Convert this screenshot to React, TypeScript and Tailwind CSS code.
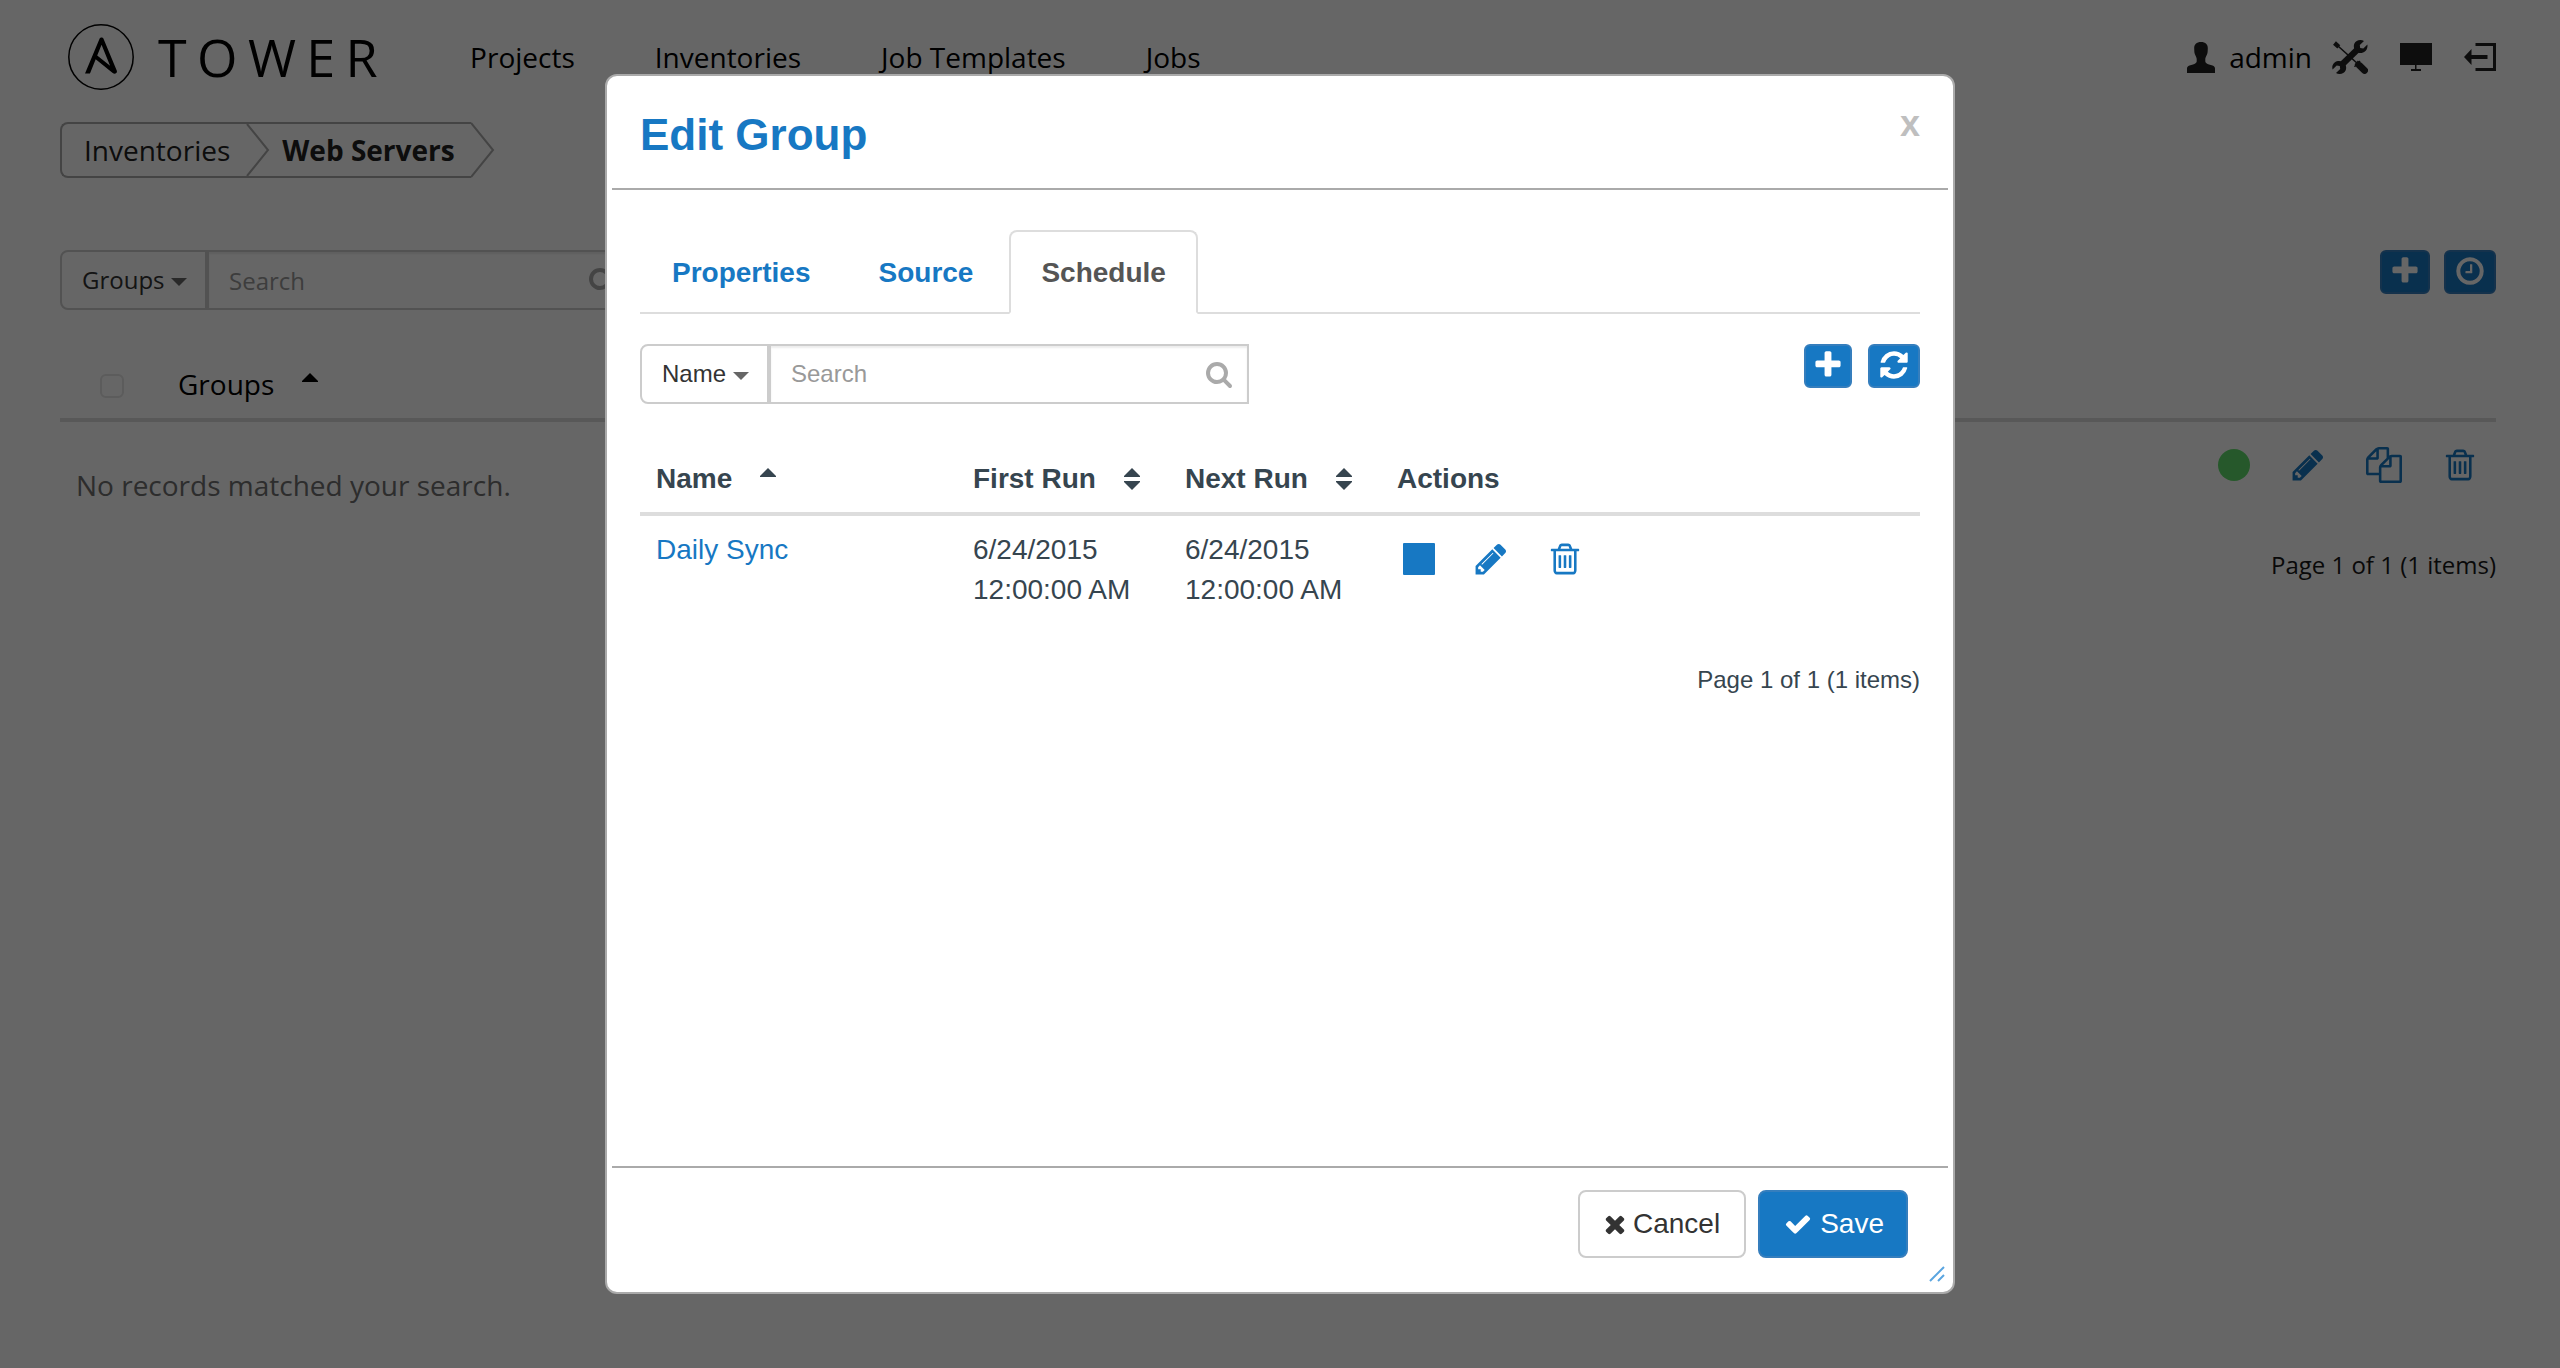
import React from "react";

const PATHS = {
  pencil:
    "M491 1536l91-91-235-235-91 91v107h128v128h107zm523-928q0-22-22-22-10 0-17 7l-542 542q-7 7-7 17 0 22 22 22 10 0 17-7l542-542q7-7 7-17zm-54-192l416 416-832 832h-416v-416zm683 96q0 53-37 90l-166 166-416-416 166-165q36-38 90-38 53 0 91 38l235 234q37 39 37 91z",
  trash:
    "M704 736v576q0 14-9 23t-23 9h-64q-14 0-23-9t-9-23v-576q0-14 9-23t23-9h64q14 0 23 9t9 23zm256 0v576q0 14-9 23t-23 9h-64q-14 0-23-9t-9-23v-576q0-14 9-23t23-9h64q14 0 23 9t9 23zm256 0v576q0 14-9 23t-23 9h-64q-14 0-23-9t-9-23v-576q0-14 9-23t23-9h64q14 0 23 9t9 23zm128 724v-948h-896v948q0 22 7 40.5t14.5 27 10.5 8.5h832q3 0 10.5-8.5t14.5-27 7-40.5zm-672-1076h448l-48-117q-7-9-17-11h-317q-10 2-17 11zm928 32v64q0 14-9 23t-23 9h-96v948q0 83-47 143.5t-113 60.5h-832q-66 0-113-58.5t-47-141.5v-952h-96q-14 0-23-9t-9-23v-64q0-14 9-23t23-9h309l70-167q15-37 54-63t79-26h320q40 0 79 26t54 63l70 167h309q14 0 23 9t9 23z",
  files:
    "M1696 384q40 0 68 28t28 68v1216q0 40-28 68t-68 28h-960q-40 0-68-28t-28-68v-288h-544q-40 0-68-28t-28-68v-672q0-40 20-88t48-76l408-408q28-28 76-48t88-20h416q40 0 68 28t28 68v328q68-40 128-40h416zm-544 213l-299 299h299v-299zm-640-384l-299 299h299v-299zm196 647l316-316v-416h-384v416q0 40-28 68t-68 28h-416v640h512v-256q0-40 20-88t48-76zm956 804v-1152h-384v416q0 40-28 68t-68 28h-416v640h896z",
  plus: "M1600 736v192q0 40-28 68t-68 28h-416v416q0 40-28 68t-68 28h-192q-40 0-68-28t-28-68v-416h-416q-40 0-68-28t-28-68v-192q0-40 28-68t68-28h416v-416q0-40 28-68t68-28h192q40 0 68 28t28 68v416h416q40 0 68 28t28 68z",
  clock:
    "M1024 544v448q0 14-9 23t-23 9h-320q-14 0-23-9t-9-23v-64q0-14 9-23t23-9h224v-352q0-14 9-23t23-9h64q14 0 23 9t9 23zm416 352q0-148-73-273t-198-198-273-73-273 73-198 198-73 273 73 273 198 198 273 73 273-73 198-198 73-273zm224 0q0 209-103 385.5t-279.5 279.5-385.5 103-385.5-103-279.5-279.5-103-385.5 103-385.5 279.5-279.5 385.5-103 385.5 103 279.5 279.5 103 385.5z",
  refresh:
    "M1639 1056q0 5-1 7-64 268-268 434.5t-478 166.5q-146 0-282.5-55t-243.5-157l-129 129q-19 19-45 19t-45-19-19-45v-448q0-26 19-45t45-19h448q26 0 45 19t19 45-19 45l-137 137q71 66 161 102t187 36q134 0 250-65t186-179q11-17 53-117 8-23 30-23h192q13 0 22.5 9.5t9.5 22.5zm25-800v448q0 26-19 45t-45 19h-448q-26 0-45-19t-19-45 19-45l138-138q-148-137-349-137-134 0-250 65t-186 179q-11 17-53 117-8 23-30 23h-199q-13 0-22.5-9.5t-9.5-22.5v-7q65-268 270-434.5t480-166.5q146 0 284 55.5t245 156.5l130-129q19-19 45-19t45 19 19 45z",
  times:
    "M1490 1322q0 40-28 68l-136 136q-28 28-68 28t-68-28l-294-294-294 294q-28 28-68 28t-68-28l-136-136q-28-28-28-68t28-68l294-294-294-294q-28-28-28-68t28-68l136-136q28-28 68-28t68 28l294 294 294-294q28-28 68-28t68 28l136 136q28 28 28 68t-28 68l-294 294 294 294q28 28 28 68z",
  check:
    "M1671 566q0 40-28 68l-724 724-136 136q-28 28-68 28t-68-28l-136-136-362-362q-28-28-28-68t28-68l136-136q28-28 68-28t68 28l294 295 656-657q28-28 68-28t68 28l136 136q28 28 28 68z",
  search:
    "M1216 832q0-185-131.5-316.5t-316.5-131.5-316.5 131.5-131.5 316.5 131.5 316.5 316.5 131.5 316.5-131.5 131.5-316.5zm512 832q0 52-38 90t-90 38q-54 0-90-38l-343-342q-179 124-399 124-143 0-273.5-55.5t-225-150-150-225-55.5-273.5 55.5-273.5 150-225 225-150 273.5-55.5 273.5 55.5 225 150 150 225 55.5 273.5q0 220-124 399l343 343q37 37 37 90z",
};

function Icon({ name, className }: { name: keyof typeof PATHS; className: string }) {
  return (
    <svg viewBox="0 0 1792 1792" className={className} fill="currentColor" aria-hidden="true">
      <path d={PATHS[name]} />
    </svg>
  );
}

function AnsibleMark() {
  return (
    <svg viewBox="0 0 66 66" className="size-[66px] shrink-0" aria-hidden="true">
      <circle cx="33" cy="33" r="32.2" fill="none" stroke="currentColor" strokeWidth="1.5" />
      <path
        transform="scale(2.75)"
        fillRule="evenodd"
        d="M17.797 17.305c-.011.471-.403.842-.875.83-.236 0-.416-.09-.664-.293l-6.19-5-2.079 5.203H6.191L11.438 5.44c.124-.314.427-.52.764-.506.326-.014.63.189.742.506l4.774 11.494c.045.111.08.234.08.348zM10.617 11.473l4.686 3.695-3.102-7.662z"
      />
    </svg>
  );
}

function UserIcon() {
  return (
    <svg viewBox="0 0 28 31" className="h-[31px] w-7" fill="currentColor" aria-hidden="true">
      <path d="M14 0C9.500 0 7 2.500 7.200 6.500C7.300 9 7.300 11 8 12.500C8.800 14.500 9.700 15.500 9.700 17V19.500C9.500 21 8 21.800 6 22.400L2.500 23.400C.8 24 0 25 0 26.500V31H28V26.500C28 25 27.200 24 25.500 23.400L22 22.400C20 21.800 18.500 21 18.300 19.500V17C18.300 15.500 19.200 14.500 20 12.500C20.700 11 20.700 9 20.800 6.500C21 2.500 18.500 0 14 0Z" />
    </svg>
  );
}

function ToolsIcon() {
  return (
    <svg viewBox="0 0 36 34" className="h-[34px] w-9" fill="none" stroke="currentColor" aria-hidden="true">
      <path d="M6 6L26 24" strokeWidth="1.600" />
      <path d="M2.500 3L6.800 6.800" strokeWidth="4.400" />
      <path d="M24.200 22.300L27.500 25.300" strokeWidth="5" />
      <path d="M27.500 25.600L32.600 30.400" strokeWidth="6.800" strokeLinecap="round" />
      <path d="M22.500 26.800L28 21" strokeWidth="1.600" />
      <path d="M9 25.500L26.500 8.500" strokeWidth="6.400" />
      <path
        fill="currentColor"
        stroke="none"
        d="M32 .9L27.800 5L28.200 8L31.300 8.400L35.400 4.400C36 8.500 33.800 12.200 29.800 12.900C27.500 13.300 25.300 12.600 23.700 11C21.800 9 21.300 6 22.400 3.500C24 .2 28.500-1 32 .9Z"
      />
      <path
        fill="currentColor"
        stroke="none"
        d="M4 33.100L8.200 29L7.800 26L4.700 25.600L.6 29.600C-.6 25.500 1.800 21.600 6 21C8.500 20.700 10.700 21.400 12.300 23C14.200 25 14.700 28 13.600 30.500C12 33.800 7.500 35 4 33.100Z"
      />
    </svg>
  );
}

function MonitorIcon() {
  return (
    <svg viewBox="0 0 32 28" className="h-7 w-8" fill="currentColor" aria-hidden="true">
      <path d="M0 0H32V22H16.500V26H21V28H11V26H15V22H0Z" />
    </svg>
  );
}

function ExitIcon() {
  return (
    <svg viewBox="0 0 32 28" className="h-7 w-8" fill="currentColor" aria-hidden="true">
      <path d="M0 14L7.500 6V12H23.500V16H7.500V22ZM11.500 0H32V28H11.500V25H29V3H11.500Z" />
    </svg>
  );
}

function SortIcon({ both = false }: { both?: boolean }) {
  return (
    <svg viewBox="0 0 16 22" className="h-[22px] w-4" fill="currentColor" aria-hidden="true">
      <path d="M8 0L16 8V9H0V8Z" />
      {both && <path d="M0 13H16V14L8 22L0 14Z" />}
    </svg>
  );
}

function SearchGroup({ id, field, width }: { id: string; field: string; width: string }) {
  return (
    <div className="flex h-[60px] text-2xl">
      <div className="relative flex">
        <select
          aria-label="Search field"
          className="h-full appearance-none rounded-l-lg border-2 border-[#ccc] bg-white pr-10 pl-5 text-[#333]"
        >
          <option>{field}</option>
        </select>
        <svg
          viewBox="0 0 16 8"
          className="pointer-events-none absolute top-[28px] right-5 h-2 w-4"
          fill="#666"
          aria-hidden="true"
        >
          <path d="M0 0H16L8 8Z" />
        </svg>
      </div>
      <div className={"relative " + width}>
        <input
          id={id}
          type="text"
          aria-label="Search"
          placeholder="Search"
          className="h-full w-full border-2 border-[#ccc] bg-white pr-16 pl-5 text-[#333] shadow-[inset_0_2px_2px_rgba(0,0,0,0.075)] placeholder:text-[#999]"
        />
        <button type="button" aria-label="Run search" className="absolute top-4 right-4 text-[#aaa]">
          <Icon name="search" className="size-7" />
        </button>
      </div>
    </div>
  );
}

function SquareButton({
  name,
  label,
  padding = "px-2",
}: {
  name: keyof typeof PATHS;
  label: string;
  padding?: string;
}) {
  return (
    <button
      type="button"
      aria-label={label}
      className={
        "flex h-11 items-start rounded-md border-2 border-[#357ebd] bg-[#1778c3] pt-[3px] text-white " + padding
      }
    >
      <Icon name={name} className="size-8" />
    </button>
  );
}

const NAV = ["Projects", "Inventories", "Job Templates", "Jobs"];

function InventoryPage() {
  return (
    <div className="pr-16 pl-[60px] text-black">
      <header className="flex h-[114px] items-center justify-between pl-2">
        <div className="flex items-center">
          <a href="#home" className="flex items-center gap-6">
            <AnsibleMark />
            <span className="text-[52px] leading-none tracking-[0.2em]">TOWER</span>
          </a>
          <nav className="ml-[82px] flex gap-20">
            {NAV.map((item) => (
              <a key={item} href="#nav">
                {item}
              </a>
            ))}
          </nav>
        </div>
        <div className="flex items-center text-[#222]">
          <a href="#account" className="flex items-center gap-[14px]">
            <UserIcon />
            <span className="text-black">admin</span>
          </a>
          <a href="#setup" aria-label="Setup" className="ml-5">
            <ToolsIcon />
          </a>
          <a href="#monitor" aria-label="Monitor" className="ml-8">
            <MonitorIcon />
          </a>
          <a href="#logout" aria-label="Log out" className="ml-8">
            <ExitIcon />
          </a>
        </div>
      </header>

      <nav aria-label="Breadcrumb" className="mt-2 flex h-14 text-[#222]">
        <div className="flex items-center rounded-l-lg border-y-2 border-l-2 border-[#aaa] pl-[22px]">
          <a href="#inventories">Inventories</a>
          <svg viewBox="0 0 24 52" className="ml-4 h-[52px] w-6" fill="none" stroke="#aaa" strokeWidth="2" aria-hidden="true">
            <path d="M1 0L22 26L1 52" />
          </svg>
          <span className="mr-4 ml-3 font-bold">Web Servers</span>
        </div>
        <svg viewBox="0 0 24 56" className="h-14 w-6" fill="none" stroke="#aaa" strokeWidth="2" aria-hidden="true">
          <path d="M0 1L22 28L0 55" />
        </svg>
      </nav>

      <div className="mt-[72px] flex items-start justify-between">
        <SearchGroup id="group-search" field="Groups" width="w-[425px]" />
        <div className="flex gap-[14px]">
          <SquareButton name="plus" label="Add host" padding="px-[7px]" />
          <SquareButton name="clock" label="Schedules" />
        </div>
      </div>

      <div className="mt-[54px] flex items-center border-b-4 border-[#ddd] pb-[14px] pl-10">
        <input
          type="checkbox"
          aria-label="Select all groups"
          className="mt-1 size-6 appearance-none rounded-md border-2 border-[#e5e5e5] bg-white"
        />
        <button type="button" className="ml-[54px] flex items-center gap-7">
          Groups
          <SortIcon />
        </button>
      </div>

      <div className="flex items-start justify-between">
        <p className="pt-[43px] pl-4 text-[#707070]">No records matched your search.</p>
        <div className="flex flex-col items-end pt-[25px]">
          <div className="flex items-center gap-10 pr-[18px] text-[#1778c3]">
            <span className="size-8 rounded-full bg-[#60dd6c]" />
            <button type="button" aria-label="Edit host">
              <Icon name="pencil" className="size-9" />
            </button>
            <button type="button" aria-label="Copy host">
              <Icon name="files" className="size-9" />
            </button>
            <button type="button" aria-label="Delete host">
              <Icon name="trash" className="size-9" />
            </button>
          </div>
          <p className="mt-[65px] text-2xl leading-[34px] text-[#171717]">Page 1 of 1 (1 items)</p>
        </div>
      </div>
    </div>
  );
}

function ScheduleTable() {
  return (
    <table className="mt-[55px] w-full table-fixed text-left leading-10">
      <thead>
        <tr className="border-b-4 border-[#ddd]">
          <th className="w-[317px] px-4 pb-[13px]">
            <button type="button" className="flex items-center gap-7">
              Name <SortIcon />
            </button>
          </th>
          <th className="w-[212px] pb-[13px] pl-4">
            <button type="button" className="flex items-center gap-7">
              First Run <SortIcon both />
            </button>
          </th>
          <th className="w-[212px] pb-[13px] pl-4">
            <button type="button" className="flex items-center gap-7">
              Next Run <SortIcon both />
            </button>
          </th>
          <th className="px-4 pb-[13px]">Actions</th>
        </tr>
      </thead>
      <tbody>
        <tr className="align-top">
          <td className="px-4 pt-[14px]">
            <a href="#daily-sync" className="text-[#1778c3]">
              Daily Sync
            </a>
          </td>
          <td className="pt-[14px] pl-4">
            6/24/2015
            <br />
            12:00:00 AM
          </td>
          <td className="pt-[14px] pl-4">
            6/24/2015
            <br />
            12:00:00 AM
          </td>
          <td className="px-4 pt-[25px]">
            <div className="flex items-center gap-[38px] pl-1.5 text-[#1778c3]">
              <button type="button" aria-label="Stop schedule" className="size-8 rounded-[1px] bg-[#1778c3]" />
              <button type="button" aria-label="Edit schedule">
                <Icon name="pencil" className="size-9" />
              </button>
              <button type="button" aria-label="Delete schedule">
                <Icon name="trash" className="size-9" />
              </button>
            </div>
          </td>
        </tr>
      </tbody>
    </table>
  );
}

function EditGroupDialog() {
  return (
    <div
      role="dialog"
      aria-labelledby="dialog-title"
      className="relative w-[1350px] max-w-full rounded-xl border-2 border-[#aaa] bg-white px-[5px] font-['Liberation_Sans',Arial,sans-serif] text-[#36454f]"
    >
      <header className="flex items-start justify-between border-b-2 border-[#aaa] px-7 pt-7 pb-[29px]">
        <h1 id="dialog-title" className="mt-[7px] text-[44px] leading-[48px] font-bold text-[#1778c3]">
          Edit Group
        </h1>
        <button type="button" aria-label="Close" className="text-4xl leading-10 font-bold text-[#bfbfbf]">
          x
        </button>
      </header>

      <div className="min-h-[976px] px-7 pt-10">
        <div role="tablist" className="flex gap-1 border-b-2 border-[#ddd] leading-10 font-bold text-[#1778c3]">
          <button type="button" role="tab" className="px-8 pt-[23px] pb-[19px]">
            Properties
          </button>
          <button type="button" role="tab" className="px-8 pt-[23px] pb-[19px]">
            Source
          </button>
          <button
            type="button"
            role="tab"
            aria-selected="true"
            className="-mb-0.5 rounded-t-lg border-2 border-[#ddd] border-b-white bg-white px-[30px] pt-[21px] pb-[19px] text-[#555]"
          >
            Schedule
          </button>
        </div>

        <div className="mt-[30px] flex items-start justify-between">
          <SearchGroup id="schedule-search" field="Name" width="w-[480px]" />
          <div className="flex gap-4">
            <SquareButton name="plus" label="Add schedule" padding="px-1.5" />
            <SquareButton name="refresh" label="Refresh" />
          </div>
        </div>

        <ScheduleTable />
        <p className="mt-[53px] text-right text-2xl leading-[34px]">Page 1 of 1 (1 items)</p>
      </div>

      <footer className="flex justify-end gap-3 border-t-2 border-[#aaa] pt-[22px] pr-10 pb-[34px] leading-10">
        <button
          type="button"
          className="flex items-center gap-1 rounded-lg border-2 border-[#ccc] bg-white py-3 pr-6 pl-[21px] text-[#333]"
        >
          <Icon name="times" className="size-7" />
          Cancel
        </button>
        <button
          type="button"
          className="flex items-center gap-2 rounded-lg border-2 border-[#357ebd] bg-[#1778c3] py-3 pr-[22px] pl-6 text-white"
        >
          <Icon name="check" className="size-7" />
          Save
        </button>
      </footer>

      <svg
        viewBox="0 0 16 16"
        className="absolute right-2 bottom-2.5 size-4 cursor-se-resize"
        fill="none"
        stroke="#5aa5e0"
        strokeWidth="2"
        aria-hidden="true"
      >
        <path d="M1 15L15 1M9 15L15 9" />
      </svg>
    </div>
  );
}

export default function App() {
  return (
    <div className="relative min-h-screen bg-white font-['Open_Sans',sans-serif] text-[28px] leading-10">
      <InventoryPage />
      <div className="absolute inset-0 flex items-start justify-center bg-black/60 pt-[74px]">
        <EditGroupDialog />
      </div>
    </div>
  );
}
